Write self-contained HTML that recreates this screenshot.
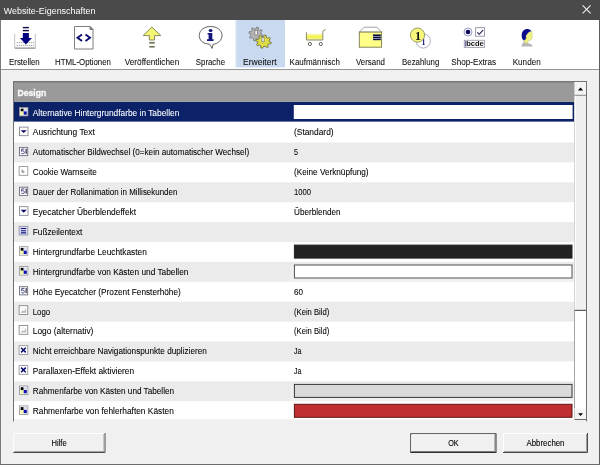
<!DOCTYPE html><html><head><meta charset="utf-8"><style>
html,body{margin:0;padding:0;background:#f0f0f0;overflow:hidden}
svg{display:block;will-change:transform}
text{font-family:"Liberation Sans", sans-serif}
</style></head><body>
<svg width="600" height="465" viewBox="0 0 600 465">
<rect x="0" y="0" width="600" height="465" fill="#f0f0f0"/>
<rect x="0" y="0" width="600" height="20" fill="#4a4a4a"/>
<text x="3.7" y="13.5" font-size="9.6" fill="#ffffff" font-weight="normal" text-anchor="start" textLength="91.7" lengthAdjust="spacingAndGlyphs">Website-Eigenschaften</text>
<path d="M582.6 5.3 L590.6 13.3 M590.6 5.3 L582.6 13.3" stroke="#f4f4f4" stroke-width="1.05"/>
<rect x="1" y="20" width="598" height="49" fill="#ffffff"/>
<rect x="235.5" y="20" width="49.5" height="47.4" fill="#c9daf0"/><rect x="236.2" y="20" width="1" height="47.4" fill="#d8e4f4"/>
<rect x="1" y="69" width="598" height="1" fill="#969696"/>
<rect x="0" y="20" width="1" height="445" fill="#7a7a7a"/>
<rect x="599" y="20" width="1" height="445" fill="#5e5e5e"/>
<rect x="0" y="464" width="600" height="1" fill="#6a6a6a"/>
<text x="9" y="65.3" font-size="8.2" fill="#101010" font-weight="normal" text-anchor="start" textLength="30.7" lengthAdjust="spacingAndGlyphs" stroke="#101010" stroke-width="0.07">Erstellen</text>
<text x="55" y="65.3" font-size="8.2" fill="#101010" font-weight="normal" text-anchor="start" textLength="56" lengthAdjust="spacingAndGlyphs" stroke="#101010" stroke-width="0.07">HTML-Optionen</text>
<text x="124.7" y="65.3" font-size="8.2" fill="#101010" font-weight="normal" text-anchor="start" textLength="54.6" lengthAdjust="spacingAndGlyphs" stroke="#101010" stroke-width="0.07">Veröffentlichen</text>
<text x="195.8" y="65.3" font-size="8.2" fill="#101010" font-weight="normal" text-anchor="start" textLength="29.2" lengthAdjust="spacingAndGlyphs" stroke="#101010" stroke-width="0.07">Sprache</text>
<text x="243" y="65.3" font-size="8.2" fill="#101010" font-weight="normal" text-anchor="start" textLength="33.7" lengthAdjust="spacingAndGlyphs" stroke="#101010" stroke-width="0.07">Erweitert</text>
<text x="289.6" y="65.3" font-size="8.2" fill="#101010" font-weight="normal" text-anchor="start" textLength="50.4" lengthAdjust="spacingAndGlyphs" stroke="#101010" stroke-width="0.07">Kaufmännisch</text>
<text x="356" y="65.3" font-size="8.2" fill="#101010" font-weight="normal" text-anchor="start" textLength="29" lengthAdjust="spacingAndGlyphs" stroke="#101010" stroke-width="0.07">Versand</text>
<text x="402" y="65.3" font-size="8.2" fill="#101010" font-weight="normal" text-anchor="start" textLength="37.3" lengthAdjust="spacingAndGlyphs" stroke="#101010" stroke-width="0.07">Bezahlung</text>
<text x="451.3" y="65.3" font-size="8.2" fill="#101010" font-weight="normal" text-anchor="start" textLength="44.7" lengthAdjust="spacingAndGlyphs" stroke="#101010" stroke-width="0.07">Shop-Extras</text>
<text x="512.7" y="65.3" font-size="8.2" fill="#101010" font-weight="normal" text-anchor="start" textLength="28.0" lengthAdjust="spacingAndGlyphs" stroke="#101010" stroke-width="0.07">Kunden</text>
<g>
<path d="M14.7 34 V48.2 H35.3 V34" fill="#fff" stroke="#bcbcbc" stroke-width="0.9"/>
<path d="M15 48.1 H35.5" stroke="#8a8a8a" stroke-width="1"/>
<path d="M16.8 42.6 H34 M16.8 45.4 H34" stroke="#6a6a6a" stroke-width="0.8" stroke-dasharray="1 1"/>
<rect x="22.8" y="26.9" width="6.1" height="1.4" fill="#0a0a4a"/>
<rect x="22.8" y="29.9" width="6.1" height="1.4" fill="#0a0a4a"/>
<rect x="22.8" y="33" width="6.1" height="5.3" fill="#00007e"/>
<path d="M19.9 38 H31.9 L25.9 44.4 Z" fill="#00007e"/>
</g>
<g>
<path d="M74.5 26.5 H90 L93 29.5 V49 H74.5 Z" fill="#fff" stroke="#6f6f6f" stroke-width="0.9"/>
<path d="M90 26.5 V29.5 H93 Z" fill="#8a8a8a" stroke="#6f6f6f" stroke-width="0.8"/>
<path d="M82 34.5 L77.5 37.7 L82 41 M85.5 34.5 L90 37.7 L85.5 41" fill="none" stroke="#0d0d70" stroke-width="1.9"/>
</g>
<g>
<path d="M151.8 27 L160.8 35.6 H154.5 V40 H149.3 V35.6 H143.2 Z" fill="#f4f474" stroke="#6e6e44" stroke-width="0.8" stroke-linejoin="miter"/>
<rect x="149.3" y="41.9" width="5.4" height="1.8" fill="#76765a"/>
<rect x="149.3" y="45.9" width="5.4" height="1.7" fill="#76765a"/>
</g>
<g>
<path d="M205.5 43.5 C201.2 42 199.3 39 199.3 35.4 C199.3 30.2 204.2 26.5 210.6 26.5 C217 26.5 222 30.2 222 35.4 C222 40.5 217.5 44 213 44.3 L212.2 48.4 L209.5 44.2 Z" fill="#fff" stroke="#505050" stroke-width="0.9"/>
<ellipse cx="210.6" cy="30.4" rx="1.9" ry="1.5" fill="#14147e"/>
<path d="M207.6 33.1 H212.3 V39.3 H213.6 V40.9 H207 V39.3 H208.6 V34.4 H207.6 Z" fill="#14147e"/>
</g>
<g>
<path d="M261.10 34.00 L262.85 34.82 L262.47 36.42 L260.53 36.36 L259.58 37.68 L260.23 39.50 L258.83 40.36 L257.51 38.95 L255.90 39.20 L255.08 40.95 L253.48 40.57 L253.54 38.63 L252.22 37.68 L250.40 38.33 L249.54 36.93 L250.95 35.61 L250.70 34.00 L248.95 33.18 L249.33 31.58 L251.27 31.64 L252.22 30.32 L251.57 28.50 L252.97 27.64 L254.29 29.05 L255.90 28.80 L256.72 27.05 L258.32 27.43 L258.26 29.37 L259.58 30.32 L261.40 29.67 L262.26 31.07 L260.85 32.39 Z" fill="#b4b4b4" stroke="#7c7c7c" stroke-width="0.9" stroke-linejoin="round"/>
<rect x="254.9" y="30.6" width="2.4" height="4.4" fill="#f0f0f0" stroke="#6a6a6a" stroke-width="0.6"/>
<path d="M269.30 41.60 L271.25 42.38 L270.82 43.89 L268.67 43.84 L267.60 45.09 L268.33 46.81 L266.77 47.62 L265.29 46.29 L263.50 46.53 L262.58 48.18 L260.80 47.82 L260.87 45.99 L259.40 45.09 L257.37 45.70 L256.42 44.38 L257.98 43.12 L257.70 41.60 L255.75 40.82 L256.18 39.31 L258.33 39.36 L259.40 38.11 L258.67 36.39 L260.23 35.58 L261.71 36.91 L263.50 36.67 L264.42 35.02 L266.20 35.38 L266.13 37.21 L267.60 38.11 L269.63 37.50 L270.58 38.82 L269.02 40.08 Z" fill="#dede44" stroke="#6e6e40" stroke-width="0.9" stroke-linejoin="round"/>
<rect x="261.9" y="37.5" width="2.2" height="4.4" fill="#f4f4f4" stroke="#6a6a6a" stroke-width="0.6"/>
</g>
<g>
<defs><linearGradient id="cartg" x1="0" y1="0" x2="0" y2="1"><stop offset="0" stop-color="#fbfbc8"/><stop offset="0.5" stop-color="#f2f24a"/><stop offset="1" stop-color="#f4f488"/></linearGradient></defs>
<rect x="306.8" y="33.6" width="15.6" height="6" fill="url(#cartg)"/>
<path d="M306.4 32.2 V40 H322.8 V31.2 L325.6 29.4" fill="none" stroke="#8a8a6a" stroke-width="1"/>
<circle cx="309.9" cy="44" r="1.6" fill="#fff" stroke="#505050" stroke-width="0.9"/>
<circle cx="320.8" cy="44" r="1.6" fill="#fff" stroke="#505050" stroke-width="0.9"/>
</g>
<g>
<path d="M359.3 32.1 L364 27.2 H376.8 L381.6 32.1 Z" fill="#fff" stroke="#8a8a8a" stroke-width="0.8"/>
<rect x="359.3" y="32.1" width="22.3" height="15.1" fill="#ffff88" stroke="#7a7a50" stroke-width="0.9"/>
<rect x="373" y="34.4" width="7.8" height="5.8" fill="#10103c"/><rect x="373" y="36.2" width="7.8" height="0.6" fill="#d8d8f0"/><rect x="373" y="38.2" width="7.8" height="0.6" fill="#d8d8f0"/>
</g>
<g>
<circle cx="423.3" cy="41" r="7.1" fill="#fff" stroke="#9a9ab8" stroke-width="0.8"/>
<text x="423.4" y="45" font-size="8" font-weight="bold" fill="#1a1a80" text-anchor="middle" style="font-family:'Liberation Serif',serif">1</text>
<circle cx="417.5" cy="35.1" r="7.1" fill="#f6f67c" stroke="#9c9c64" stroke-width="1"/>
<text x="417.9" y="39.5" font-size="12" font-weight="bold" fill="#101010" text-anchor="middle" style="font-family:'Liberation Serif',serif">1</text>
</g>
<g>
<circle cx="468" cy="32" r="4" fill="#fff" stroke="#9090c0" stroke-width="0.9"/>
<circle cx="468" cy="32" r="2.3" fill="#0a0a60"/>
<rect x="475.6" y="27.7" width="8.9" height="8.5" fill="#fff" stroke="#9090a8" stroke-width="0.9"/>
<path d="M477.3 32.3 L479.3 34.3 L483 30.2" fill="none" stroke="#1a1a50" stroke-width="1.1"/>
<rect x="464.3" y="40.3" width="20.1" height="7.1" fill="#fff" stroke="#9a9aa8" stroke-width="0.9"/>
<rect x="465.2" y="41.2" width="1.1" height="5.3" fill="#5050a0"/>
<text x="466.2" y="46.3" font-size="6.8" font-weight="bold" fill="#101010" textLength="17.6" lengthAdjust="spacingAndGlyphs">bcde</text>
</g>
<g>
<path d="M521.2 46.6 L522.8 43 L524.2 41.5 L525.5 43.3 L527.7 43 L531.5 44.6 L532.8 46.6 Z" fill="#b4b4b4"/>
<path d="M531.3 31.3 C532.2 32.5 532.3 34 532.1 35.5 L532.6 37 L531.9 37.5 C531.9 39 531 40.3 529.5 40.5 L528 41 L527.8 43 L525.5 43.6 L523.6 40.6 L525.3 39.5 L526.3 37.6 L525.6 36.3 C526.5 35 527.5 33 529.3 31.8 Z" fill="#f0f080" stroke="#b0b070" stroke-width="0.4"/>
<path d="M521.7 36 C521.5 31.5 524 29 527.5 29 C529.5 29 531 30 531.3 31.3 L529.3 31.8 C527.5 33 526.5 35 525.6 36.3 L526.3 37.6 L525.3 39.5 L523.8 40.5 C522.3 39.2 521.7 37.8 521.7 36 Z" fill="#0c0c8c"/>
</g>
<rect x="13.3" y="81.5" width="573.2" height="339.9" fill="#f0f0f0"/>
<rect x="14" y="82" width="560" height="19.800000000000004" fill="#9a9a9a"/>
<text x="17.6" y="95.9" font-size="9.4" fill="#fafafa" font-weight="bold" text-anchor="start" textLength="28.6" lengthAdjust="spacingAndGlyphs" stroke="#fafafa" stroke-width="0.35">Design</text>
<clipPath id="gclip"><rect x="14" y="101.7" width="560" height="317.6"/></clipPath>
<g clip-path="url(#gclip)">
<rect x="14" y="102.7" width="560" height="318.4" fill="#ffffff"/>
<rect x="14" y="101.80" width="560" height="19.80" fill="#0b2269"/>
<g transform="translate(19.1,106.9)"><rect x="0.4" y="0.5" width="8.4" height="8.5" fill="#fff" stroke="#8e8e8e" stroke-width="0.8"/><rect x="1.6" y="1.7" width="3" height="2.9" fill="#000"/><rect x="4.6" y="1.4" width="3.4" height="3.1" fill="#dcdcf4"/><rect x="1.2" y="4.6" width="3.4" height="3.3" fill="#f4f4a0"/><rect x="4.6" y="4.5" width="3.1" height="3.3" fill="#1010b4"/></g>
<text x="32.8" y="115.5" font-size="8.3" fill="#ffffff" font-weight="normal" text-anchor="start" textLength="146.5" lengthAdjust="spacingAndGlyphs" stroke="#ffffff" stroke-width="0.07">Alternative Hintergrundfarbe in Tabellen</text>
<rect x="293.8" y="105.00" width="278.8" height="14" fill="#fff"/>
<g transform="translate(19.1,127.1)"><rect x="0.3" y="0" width="8.6" height="8.6" fill="#fff" stroke="#7a7a8a" stroke-width="0.8"/><path d="M1.5 3.1 H7.7 L4.6 6.0 Z" fill="#0a0a60"/></g>
<text x="32.8" y="135.4" font-size="8.3" fill="#000000" font-weight="normal" text-anchor="start" textLength="62" lengthAdjust="spacingAndGlyphs" stroke="#000000" stroke-width="0.07">Ausrichtung Text</text>
<text x="294" y="135.4" font-size="8.3" fill="#000000" font-weight="normal" text-anchor="start" textLength="39.6" lengthAdjust="spacingAndGlyphs" stroke="#000000" stroke-width="0.07">(Standard)</text>
<rect x="14" y="142.50" width="560" height="19.90" fill="#ebebeb"/>
<g transform="translate(19.1,146.7)"><rect x="0.4" y="0.7" width="8.2" height="8.2" fill="#fff" stroke="#6e6e7e" stroke-width="0.9"/><path d="M5.3 2.4 H2.6 L2.4 4.6 C3.4 4.0 5.3 4.0 5.3 5.6 C5.3 7.2 3.4 7.4 2.2 6.6" fill="none" stroke="#4a4a86" stroke-width="1"/><rect x="6.5" y="2.1" width="1.1" height="5.0" fill="#1a1a3a"/></g>
<text x="32.8" y="155.3" font-size="8.3" fill="#000000" font-weight="normal" text-anchor="start" textLength="216.3" lengthAdjust="spacingAndGlyphs" stroke="#000000" stroke-width="0.07">Automatischer Bildwechsel (0=kein automatischer Wechsel)</text>
<text x="294" y="155.3" font-size="8.3" fill="#000000" font-weight="normal" text-anchor="start" textLength="4" lengthAdjust="spacingAndGlyphs" stroke="#000000" stroke-width="0.07">5</text>
<g transform="translate(19.1,166.6)"><rect x="0" y="0" width="8.7" height="8.7" fill="#fff" stroke="#8a8a8a" stroke-width="0.8"/><path d="M2.5 2.5 L6 5.5 L4.5 5.7 L5.5 7 L2.5 6 Z" fill="#a0a0a0"/></g>
<text x="32.8" y="175.2" font-size="8.3" fill="#000000" font-weight="normal" text-anchor="start" textLength="64" lengthAdjust="spacingAndGlyphs" stroke="#000000" stroke-width="0.07">Cookie Warnseite</text>
<text x="294" y="175.2" font-size="8.3" fill="#000000" font-weight="normal" text-anchor="start" textLength="74.6" lengthAdjust="spacingAndGlyphs" stroke="#000000" stroke-width="0.07">(Keine Verknüpfung)</text>
<rect x="14" y="182.30" width="560" height="19.90" fill="#ebebeb"/>
<g transform="translate(19.1,186.5)"><rect x="0.4" y="0.7" width="8.2" height="8.2" fill="#fff" stroke="#6e6e7e" stroke-width="0.9"/><path d="M5.3 2.4 H2.6 L2.4 4.6 C3.4 4.0 5.3 4.0 5.3 5.6 C5.3 7.2 3.4 7.4 2.2 6.6" fill="none" stroke="#4a4a86" stroke-width="1"/><rect x="6.5" y="2.1" width="1.1" height="5.0" fill="#1a1a3a"/></g>
<text x="32.8" y="195.1" font-size="8.3" fill="#000000" font-weight="normal" text-anchor="start" textLength="144.6" lengthAdjust="spacingAndGlyphs" stroke="#000000" stroke-width="0.07">Dauer der Rollanimation in Millisekunden</text>
<text x="294" y="195.1" font-size="8.3" fill="#000000" font-weight="normal" text-anchor="start" textLength="17" lengthAdjust="spacingAndGlyphs" stroke="#000000" stroke-width="0.07">1000</text>
<g transform="translate(19.1,206.7)"><rect x="0.3" y="0" width="8.6" height="8.6" fill="#fff" stroke="#7a7a8a" stroke-width="0.8"/><path d="M1.5 3.1 H7.7 L4.6 6.0 Z" fill="#0a0a60"/></g>
<text x="32.8" y="215.0" font-size="8.3" fill="#000000" font-weight="normal" text-anchor="start" textLength="103.3" lengthAdjust="spacingAndGlyphs" stroke="#000000" stroke-width="0.07">Eyecatcher Überblendeffekt</text>
<text x="294" y="215.0" font-size="8.3" fill="#000000" font-weight="normal" text-anchor="start" textLength="46.6" lengthAdjust="spacingAndGlyphs" stroke="#000000" stroke-width="0.07">Überblenden</text>
<rect x="14" y="222.10" width="560" height="19.90" fill="#ebebeb"/>
<g transform="translate(19.1,226.29999999999998)"><rect x="0" y="0" width="8.7" height="8.7" fill="#d8d8f4" stroke="#8a8aa0" stroke-width="0.8"/><path d="M1.8 2.2 H7 M1.8 4.4 H7 M1.8 6.6 H7" stroke="#10107a" stroke-width="1.1"/></g>
<text x="32.8" y="234.9" font-size="8.3" fill="#000000" font-weight="normal" text-anchor="start" textLength="49.6" lengthAdjust="spacingAndGlyphs" stroke="#000000" stroke-width="0.07">Fußzeilentext</text>
<g transform="translate(19.1,246.2)"><rect x="0.4" y="0.5" width="8.4" height="8.5" fill="#fff" stroke="#8e8e8e" stroke-width="0.8"/><rect x="1.6" y="1.7" width="3" height="2.9" fill="#000"/><rect x="4.6" y="1.4" width="3.4" height="3.1" fill="#dcdcf4"/><rect x="1.2" y="4.6" width="3.4" height="3.3" fill="#f4f4a0"/><rect x="4.6" y="4.5" width="3.1" height="3.3" fill="#1010b4"/></g>
<text x="32.8" y="254.8" font-size="8.3" fill="#000000" font-weight="normal" text-anchor="start" textLength="114" lengthAdjust="spacingAndGlyphs" stroke="#000000" stroke-width="0.07">Hintergrundfarbe Leuchtkasten</text>
<rect x="294.4" y="245.10" width="277.6" height="13" fill="#222222" stroke="#222" stroke-width="1"/>
<rect x="14" y="261.90" width="560" height="19.90" fill="#ebebeb"/>
<g transform="translate(19.1,266.09999999999997)"><rect x="0.4" y="0.5" width="8.4" height="8.5" fill="#fff" stroke="#8e8e8e" stroke-width="0.8"/><rect x="1.6" y="1.7" width="3" height="2.9" fill="#000"/><rect x="4.6" y="1.4" width="3.4" height="3.1" fill="#dcdcf4"/><rect x="1.2" y="4.6" width="3.4" height="3.3" fill="#f4f4a0"/><rect x="4.6" y="4.5" width="3.1" height="3.3" fill="#1010b4"/></g>
<text x="32.8" y="274.7" font-size="8.3" fill="#000000" font-weight="normal" text-anchor="start" textLength="155.6" lengthAdjust="spacingAndGlyphs" stroke="#000000" stroke-width="0.07">Hintergrundfarbe von Kästen und Tabellen</text>
<rect x="290.5" y="265.90" width="283" height="15.60" fill="#f1f1f1"/>
<rect x="294.4" y="265.00" width="277.6" height="13" fill="#ffffff" stroke="#505050" stroke-width="1"/>
<g transform="translate(19.1,286.0)"><rect x="0.4" y="0.7" width="8.2" height="8.2" fill="#fff" stroke="#6e6e7e" stroke-width="0.9"/><path d="M5.3 2.4 H2.6 L2.4 4.6 C3.4 4.0 5.3 4.0 5.3 5.6 C5.3 7.2 3.4 7.4 2.2 6.6" fill="none" stroke="#4a4a86" stroke-width="1"/><rect x="6.5" y="2.1" width="1.1" height="5.0" fill="#1a1a3a"/></g>
<text x="32.8" y="294.6" font-size="8.3" fill="#000000" font-weight="normal" text-anchor="start" textLength="148" lengthAdjust="spacingAndGlyphs" stroke="#000000" stroke-width="0.07">Höhe Eyecatcher (Prozent Fensterhöhe)</text>
<text x="294" y="294.6" font-size="8.3" fill="#000000" font-weight="normal" text-anchor="start" textLength="9" lengthAdjust="spacingAndGlyphs" stroke="#000000" stroke-width="0.07">60</text>
<rect x="14" y="301.70" width="560" height="19.90" fill="#ebebeb"/>
<g transform="translate(19.1,305.7)"><rect x="0" y="0" width="8.7" height="8.7" fill="#fff" stroke="#7a7a7a" stroke-width="0.8"/><path d="M1.5 7 L3.5 4.5 L5 5.8 L6.8 2.2 L7.3 7 Z" fill="#b8b8b8"/><path d="M2 2 L3 3 M4 2 L5 3" stroke="#c8c8c8" stroke-width="0.6"/></g>
<text x="32.8" y="314.5" font-size="8.3" fill="#000000" font-weight="normal" text-anchor="start" textLength="17.3" lengthAdjust="spacingAndGlyphs" stroke="#000000" stroke-width="0.07">Logo</text>
<text x="294" y="314.5" font-size="8.3" fill="#000000" font-weight="normal" text-anchor="start" textLength="35.3" lengthAdjust="spacingAndGlyphs" stroke="#000000" stroke-width="0.07">(Kein Bild)</text>
<g transform="translate(19.1,325.59999999999997)"><rect x="0" y="0" width="8.7" height="8.7" fill="#fff" stroke="#7a7a7a" stroke-width="0.8"/><path d="M1.5 7 L3.5 4.5 L5 5.8 L6.8 2.2 L7.3 7 Z" fill="#b8b8b8"/><path d="M2 2 L3 3 M4 2 L5 3" stroke="#c8c8c8" stroke-width="0.6"/></g>
<text x="32.8" y="334.4" font-size="8.3" fill="#000000" font-weight="normal" text-anchor="start" textLength="60.6" lengthAdjust="spacingAndGlyphs" stroke="#000000" stroke-width="0.07">Logo (alternativ)</text>
<text x="294" y="334.4" font-size="8.3" fill="#000000" font-weight="normal" text-anchor="start" textLength="35.3" lengthAdjust="spacingAndGlyphs" stroke="#000000" stroke-width="0.07">(Kein Bild)</text>
<rect x="14" y="341.50" width="560" height="19.90" fill="#ebebeb"/>
<g transform="translate(19.1,345.7)"><rect x="0" y="0" width="8.7" height="8.7" fill="#fff" stroke="#8a8a8a" stroke-width="0.8"/><path d="M2 2 L6.7 6.7 M6.7 2 L2 6.7" stroke="#0a0a70" stroke-width="1.5"/></g>
<text x="32.8" y="354.3" font-size="8.3" fill="#000000" font-weight="normal" text-anchor="start" textLength="174" lengthAdjust="spacingAndGlyphs" stroke="#000000" stroke-width="0.07">Nicht erreichbare Navigationspunkte duplizieren</text>
<text x="294" y="354.3" font-size="8.3" fill="#000000" font-weight="normal" text-anchor="start" textLength="7.5" lengthAdjust="spacingAndGlyphs" stroke="#000000" stroke-width="0.07">Ja</text>
<g transform="translate(19.1,365.59999999999997)"><rect x="0" y="0" width="8.7" height="8.7" fill="#fff" stroke="#8a8a8a" stroke-width="0.8"/><path d="M2 2 L6.7 6.7 M6.7 2 L2 6.7" stroke="#0a0a70" stroke-width="1.5"/></g>
<text x="32.8" y="374.2" font-size="8.3" fill="#000000" font-weight="normal" text-anchor="start" textLength="101.3" lengthAdjust="spacingAndGlyphs" stroke="#000000" stroke-width="0.07">Parallaxen-Effekt aktivieren</text>
<text x="294" y="374.2" font-size="8.3" fill="#000000" font-weight="normal" text-anchor="start" textLength="7.5" lengthAdjust="spacingAndGlyphs" stroke="#000000" stroke-width="0.07">Ja</text>
<rect x="14" y="381.30" width="560" height="19.90" fill="#ebebeb"/>
<g transform="translate(19.1,385.49999999999994)"><rect x="0.4" y="0.5" width="8.4" height="8.5" fill="#fff" stroke="#8e8e8e" stroke-width="0.8"/><rect x="1.6" y="1.7" width="3" height="2.9" fill="#000"/><rect x="4.6" y="1.4" width="3.4" height="3.1" fill="#dcdcf4"/><rect x="1.2" y="4.6" width="3.4" height="3.3" fill="#f4f4a0"/><rect x="4.6" y="4.5" width="3.1" height="3.3" fill="#1010b4"/></g>
<text x="32.8" y="394.1" font-size="8.3" fill="#000000" font-weight="normal" text-anchor="start" textLength="141.3" lengthAdjust="spacingAndGlyphs" stroke="#000000" stroke-width="0.07">Rahmenfarbe von Kästen und Tabellen</text>
<rect x="290.5" y="385.30" width="283" height="15.60" fill="#f1f1f1"/>
<rect x="294.4" y="384.40" width="277.6" height="13" fill="#dadada" stroke="#363636" stroke-width="1"/>
<g transform="translate(19.1,405.4)"><rect x="0.4" y="0.5" width="8.4" height="8.5" fill="#fff" stroke="#8e8e8e" stroke-width="0.8"/><rect x="1.6" y="1.7" width="3" height="2.9" fill="#000"/><rect x="4.6" y="1.4" width="3.4" height="3.1" fill="#dcdcf4"/><rect x="1.2" y="4.6" width="3.4" height="3.3" fill="#f4f4a0"/><rect x="4.6" y="4.5" width="3.1" height="3.3" fill="#1010b4"/></g>
<text x="32.8" y="414.0" font-size="8.3" fill="#000000" font-weight="normal" text-anchor="start" textLength="141" lengthAdjust="spacingAndGlyphs" stroke="#000000" stroke-width="0.07">Rahmenfarbe von fehlerhaften Kästen</text>
<rect x="294.4" y="404.30" width="277.6" height="13" fill="#c03030" stroke="#5a1414" stroke-width="1"/>
</g>
<rect x="13" y="81" width="574" height="1.5" fill="#787878"/>
<rect x="13" y="81" width="1" height="340.4" fill="#707070"/>
<rect x="586" y="81" width="1" height="340.4" fill="#707070"/>
<rect x="574" y="82" width="12" height="336.5" fill="#ffffff"/>
<rect x="574" y="82" width="0.8" height="336.5" fill="#909090"/>
<rect x="574.5" y="82" width="11.5" height="13.5" fill="#f4f4f4"/>
<rect x="574.5" y="94.8" width="11.5" height="1" fill="#6a6a6a"/>
<path d="M577.9 90.4 H583.1 L580.5 87.6 Z" fill="#000"/>
<rect x="574.5" y="95.8" width="11.5" height="215" fill="#efefef"/>
<rect x="574.8" y="95.8" width="1" height="215" fill="#ffffff"/>
<rect x="574.5" y="309.8" width="11.5" height="1.2" fill="#5a5a5a"/>
<rect x="574.5" y="408.3" width="11.5" height="11.5" fill="#f4f4f4"/>
<rect x="574.5" y="408.3" width="11.5" height="0.9" fill="#ffffff"/>
<rect x="574.5" y="419" width="11.5" height="1" fill="#6a6a6a"/>
<path d="M578.1 413.3 H583 L580.5 416 Z" fill="#000"/>
<rect x="13.3" y="433" width="92.2" height="20" fill="#f0f0f0"/>
<path d="M13.8 452 V433.5 H104.5" fill="none" stroke="#ffffff" stroke-width="1"/>
<path d="M13.3 452.5 H105.0 V433" fill="none" stroke="#4a4a4a" stroke-width="1"/>
<path d="M14.3 451.5 H104.0 V434" fill="none" stroke="#a0a0a0" stroke-width="1"/>
<text x="51.5" y="445.8" font-size="8.3" fill="#000000" font-weight="normal" text-anchor="start" textLength="15.2" lengthAdjust="spacingAndGlyphs" stroke="#000000" stroke-width="0.1">Hilfe</text>
<rect x="410.3" y="433.3" width="86.19999999999999" height="19.69999999999999" fill="#f0f0f0"/>
<rect x="410.8" y="433.8" width="85.19999999999999" height="18.69999999999999" fill="none" stroke="#303030" stroke-width="1"/>
<path d="M411.8 451 V434.8 H494.5" fill="none" stroke="#ffffff" stroke-width="1"/>
<path d="M411.8 451.5 H495.0 V434.8" fill="none" stroke="#7a7a7a" stroke-width="1"/>
<text x="448.15" y="445.95" font-size="8.3" fill="#000000" font-weight="normal" text-anchor="start" textLength="10.5" lengthAdjust="spacingAndGlyphs" stroke="#000000" stroke-width="0.1">OK</text>
<rect x="503" y="433" width="85" height="20" fill="#f0f0f0"/>
<path d="M503.5 452 V433.5 H587" fill="none" stroke="#ffffff" stroke-width="1"/>
<path d="M503 452.5 H587.5 V433" fill="none" stroke="#4a4a4a" stroke-width="1"/>
<path d="M504 451.5 H586.5 V434" fill="none" stroke="#a0a0a0" stroke-width="1"/>
<text x="526.5" y="445.8" font-size="8.3" fill="#000000" font-weight="normal" text-anchor="start" textLength="38" lengthAdjust="spacingAndGlyphs" stroke="#000000" stroke-width="0.1">Abbrechen</text>
</svg></body></html>
